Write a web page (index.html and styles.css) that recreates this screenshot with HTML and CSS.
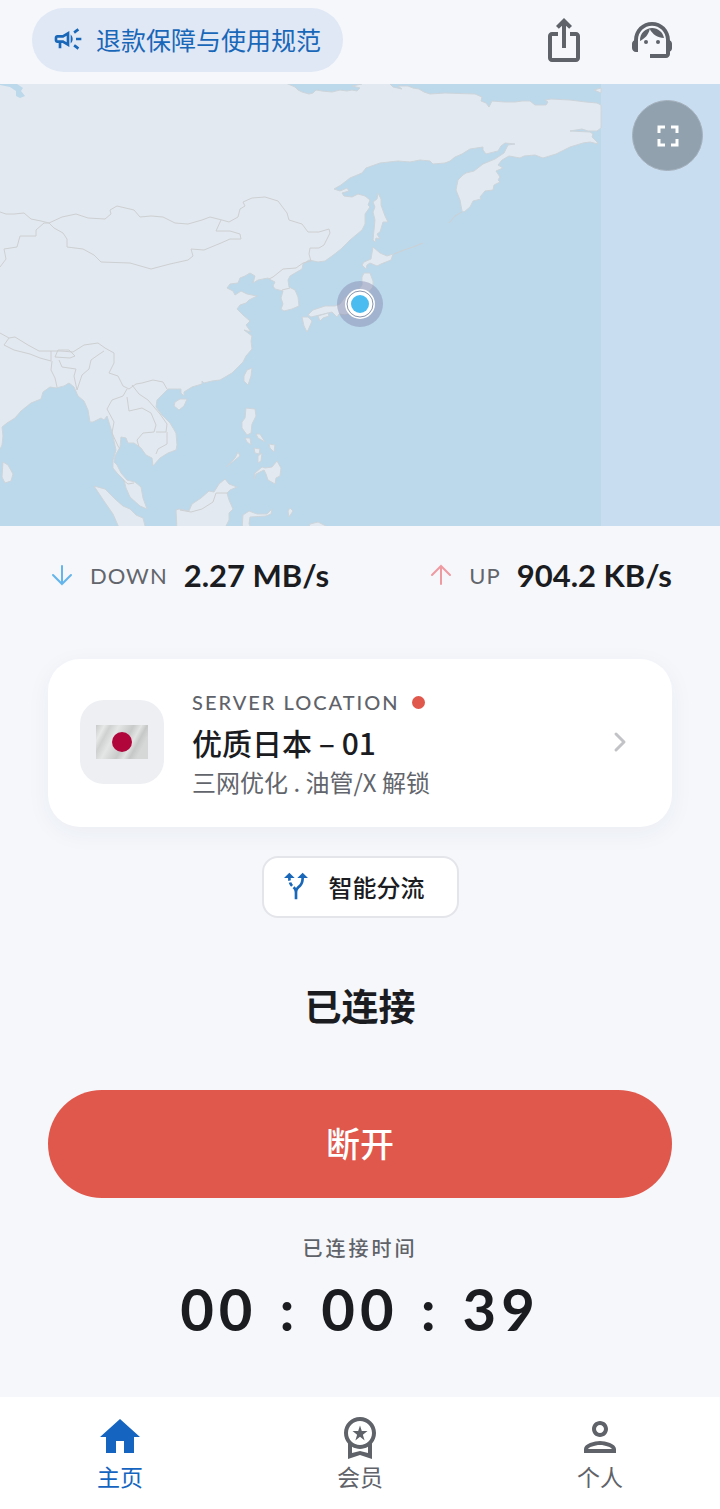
FILE: index.html
```html
<!DOCTYPE html>
<html lang="zh-CN">
<head>
  <meta charset="UTF-8" />
  <meta name="viewport" content="width=device-width, initial-scale=1.0" />
  <title>主页</title>
  <link rel="stylesheet" href="styles.css">
</head>
<body>
  <header class="topbar">
    <a class="notice" href="#notice">
      <svg class="icon-sm" viewBox="0 0 24 24" aria-hidden="true"><path d="M18 11v2h4v-2zM16 17.61c.96.71 2.21 1.65 3.2 2.39l1.2-1.6c-.99-.74-2.24-1.68-3.2-2.4-.4.54-.8 1.08-1.2 1.61zM20.4 5.6 19.2 4c-.99.74-2.24 1.68-3.2 2.4l1.2 1.6c.96-.72 2.21-1.65 3.2-2.4zM4 9c-1.1 0-2 .9-2 2v2c0 1.1.9 2 2 2h1v4h2v-4h1l5 3V6L8 9H4zm5.03 1.71L11 9.53v4.94l-1.97-1.18-.48-.29H4v-2h4.55l.48-.29zM15.5 12c0-1.33-.58-2.53-1.5-3.35v6.69c.92-.81 1.5-2.01 1.5-3.34z"/></svg>
      退款保障与使用规范
    </a>
    <div class="actions">
      <button class="icon-btn" aria-label="分享">
        <svg class="icon" viewBox="0 0 24 24"><path d="M16 5l-1.42 1.42-1.59-1.59V16h-1.98V4.83L9.42 6.42 8 5l4-4 4 4zm4 5v11c0 1.1-.9 2-2 2H6c-1.11 0-2-.9-2-2V10c0-1.11.89-2 2-2h3v2H6v11h12V10h-3V8h3c1.1 0 2 .89 2 2z"/></svg>
      </button>
      <button class="icon-btn" aria-label="客服">
        <svg class="icon" viewBox="0 0 24 24"><path d="M21 12.22C21 6.73 16.74 3 12 3c-4.69 0-9 3.65-9 9.28-.6.34-1 .98-1 1.72v2c0 1.1.9 2 2 2h1v-6.1c0-3.87 3.13-7 7-7s7 3.13 7 7V19h-8v2h8c1.1 0 2-.9 2-2v-1.22c.59-.31 1-.92 1-1.64v-2.3c0-.7-.41-1.31-1-1.62z"/><circle cx="9" cy="13" r="1"/><circle cx="15" cy="13" r="1"/><path d="M18 11.03C17.52 8.18 15.04 6 12.05 6c-3.03 0-6.29 2.51-6.03 6.45 2.47-1.01 4.33-3.21 4.86-5.89 1.31 2.63 4 4.44 7.12 4.47z"/></svg>
      </button>
    </div>
  </header>

  <section class="map">
    <svg class="map-svg" viewBox="0 84 720 442" aria-hidden="true">
      <rect class="sea" x="0" y="84" width="601" height="442"/>
      <g class="land">
        <!-- mainland -->
        <path d="M-4 80H280L288 84 295 87 298 90 302 92 309 94 313 93 316 90 322 91 332 92 340 90 347 91 352 90 357 91 360 88 352 86 362 84 366 80H386L390 84 393 87 402 89 398 86 408 86 413 88 419 89 424 92 430 94 445 93 475 94 482 97 481 101 486 103 489 107 492 101 505 102 515 102 522 101 530 101 535 105 546 105 548 102 545 100 551 99 570 100 586 102 597 103 601 105V128L597 131H588L582 129 570 131 590 132 593 134 592 137 597 142 598 144 590 142 583 143 570 147 556 154 543 158 535 155 524 156 520 158 509 156 502 160 498 165 503 168 496 171 500 177 498 180 500 182 494 185 493 190 485 191 480 197 481 199 473 201 470 207 464 212 462 211 460 200 456 190 458 180 463 175 466 173 474 171 483 164 495 159 504 153 508 145 515 144 505 143 501 146 498 151 486 154 483 150 483 147 470 149 462 154 455 157 450 161 445 163 433 164 430 161 420 160 410 162 398 161 380 163 366 168 362 173 350 178 341 185 334 189 340 191 347 188 349 191 342 193 344 196 352 197 358 194 365 196 370 200 368 205 370 207 365 214 365 224 362 230 350 240 341 249 332 256 325 261 318 262 309 260 303 264 302 269 290 276 288 280 289 287 295 290 298 297 299 306 292 309 284 311 281 309 283 304 281 298 283 291 275 289 273 286 275 282 271 280 268 278 258 280 253 283 255 276 250 273 245 276 240 278 238 283 230 284 227 288 233 291 235 295 241 291 247 294 257 296 249 300 246 303 240 305 237 309 243 315 250 321 246 325 251 332 244 330 252 336 251 341 252 349 246 356 243 362 238 367 232 373 220 380 212 381 204 383 202 381 202 384 192 387 184 392 184 396 181 393 181 389 174 389 168 389 162 395 157 400 156 407 162 415 170 423 176 433 177 445 176 450 168 453 160 458 153 466 152 458 146 455 141 448 134 443 128 443 126 438 121 437 120 447 115 456 114 462 117 465 121 473 127 480 135 482 141 487 143 498 147 509 140 506 130 497 126 488 124 480 117 473 113 468 113 460 116 450 112 432 107 416 104 420 101 418 93 422 90 422 88 410 84 401 78 396 74 387 69 383 64 386 56 388 50 387 43 392 41 399 31 403 21 411 15 418 7 423 2 427 3 436 2 445 -4 458Z"/>
        <!-- sakhalin, hokkaido, honshu, kyushu, shikoku -->
        <path d="M378 193 381 199 381 205 385 216 388 222 383 222 380 232 377 234 380 239 376 238 375 242 373 240 375 220 373 212 375 207 373 202 377 199Z"/>
        <path d="M373 247 380 253 387 256 393 254 391 260 381 264 377 266 370 263 367 265 366 269 362 265 364 262 371 259Z"/>
        <path d="M364 273 370 273 373 281 373 287 367 294 366 302 360 312 352 313 345 315 339 314 337 317 332 312 324 314 311 317 308 315 313 310 325 306 335 306 340 304 345 297 355 294 362 285 362 277Z"/>
        <path d="M302 317 308 317 312 321 309 328 307 332 304 326ZM318 316 328 313 329 316 323 318 320 321Z"/>
        <!-- taiwan, hainan, sri lanka, borneo, sumatra -->
        <path d="M247 370 252 368 251 376 248 385 244 381 244 376ZM175 402 180 399 187 399 184 406 179 410 174 406ZM3 462 8 465 13 474 11 481 5 483 2 477Z"/>
        <path d="M177 530 176 510 179 509 189 511 192 504 201 498 209 491 214 492 219 484 225 479 229 484 237 487 230 490 227 493 229 500 233 509 229 513 229 520 224 530Z"/>
        <path d="M94 486 105 489 115 499 123 506 130 509 136 515 143 518 146 530H120L113 514 104 501Z"/>
        <!-- philippines and sulawesi -->
        <path d="M246 408 255 409 256 416 252 424 251 433 247 435 242 428 242 422 245 418ZM245 438 250 438 251 445 247 442ZM256 434 260 434 265 442 258 438ZM269 444 275 445 274 452 270 448ZM254 448 260 449 259 454 255 453ZM258 456 262 453 261 461 258 463ZM255 473 262 467 265 468 272 467 277 461 281 468 280 476 276 478 275 484 268 480 266 474 264 470 256 474 254 479ZM238 452 240 456 226 467 235 458Z"/>
        <path d="M242 530 243 515 249 511 257 514 267 514 272 509 271 514 266 516 250 517 249 524 252 530ZM290 508 293 511 289 517 288 511ZM308 530 310 524 318 522 326 526 328 530ZM594 90 601 88V93Z"/>
      </g>
      <!-- inlets -->
      <path class="sea" d="M0 84H17L23 88 21 91 25 96 20 98 16 96 16 91 10 87 0 85Z"/>
      <g class="borders">
        <path d="M0 212 6 214 14 214 24 213 31 219 41 221 49 223 62 217 76 214 88 218 105 219 111 214 110 210 117 206 134 210 140 217 151 216 163 217 175 223 188 224 202 220 210 217 222 220 229 222 238 217 240 209 245 206 243 202 252 198 265 197 278 201 287 213 289 220 302 224 308 232 319 232 329 229 330 233 324 245 319 248 310 248 309 254 311 261 303 263 296 268 283 269 273 277 269 279"/>
        <path d="M49 223 54 228 63 233 67 239 67 247 83 249 94 255 101 262 130 263 151 269 170 264 188 260 193 256 191 249 204 250 221 243 230 239 241 239 240 234 230 231 216 231 221 220"/>
        <path d="M49 223 44 223 36 230 36 236 20 236 17 247 4 249 6 259 0 267"/>
        <path d="M0 333 9 338 15 337 28 345 39 351 54 351 61 351 73 352 84 345 98 343 105 348 114 353 114 363 109 373 118 376 123 386 129 389 136 384 142 383 153 380 163 382 167 389"/>
        <path d="M9 338 4 345 14 350 30 354 40 358 51 361 51 351M55 357 58 350 69 350 75 356 70 358ZM52 361 51 370 55 378 57 387M59 360 62 367 76 369 74 376 77 390M77 390 82 375 89 369 91 360 98 355 104 351"/>
        <path d="M127 389 123 396 112 400 107 409 114 422 112 433 118 446 120 449M127 397 129 411 142 408 151 413 156 425 154 432 143 433 137 440 139 447M132 385 139 394 148 400 160 414 167 424 166 432 156 432M167 432 167 444 158 449 156 454M123 480 128 484 134 483M180 510 191 512 202 509 213 502 216 493 228 493M282 290 290 288"/>
        <path d="M394 254 404 250 413 247 423 243M462 212 455 216 449 223"/>
      </g>
      <circle class="marker-halo" cx="360" cy="304" r="23"/>
      <circle class="marker-edge" cx="360" cy="304" r="15"/>
      <circle class="marker-ring" cx="360" cy="304" r="13"/>
      <circle class="marker-dot" cx="360" cy="304" r="9"/>
    </svg>
    <button class="fullscreen" aria-label="全屏">
      <svg class="icon-fs" viewBox="0 0 24 24"><path d="M7 14H5v5h5v-2H7v-3zm-2-4h2V7h3V5H5v5zm12 7h-3v2h5v-5h-2v3zM14 5v2h3v3h2V5h-5z"/></svg>
    </button>
  </section>

  <main class="content">
    <div class="stats">
      <div class="stat">
        <svg class="arrow arrow-down" viewBox="0 0 28 28" aria-hidden="true"><path d="M14 5V23M5 14L14 23L23 14"/></svg>
        <span class="stat-label">DOWN</span>
        <strong class="stat-value">2.27 MB/s</strong>
      </div>
      <div class="stat">
        <svg class="arrow arrow-up" viewBox="0 0 28 28" aria-hidden="true"><path d="M14 23V5M5 14L14 5L23 14"/></svg>
        <span class="stat-label">UP</span>
        <strong class="stat-value">904.2 KB/s</strong>
      </div>
    </div>

    <a class="server" href="#servers">
      <span class="flag-box">
        <svg class="flag" viewBox="0 0 52 34" aria-hidden="true">
          <defs>
            <linearGradient id="cloth" x1="0" y1="0" x2="1" y2=".35">
              <stop offset="0" stop-color="#c9caca"/>
              <stop offset=".15" stop-color="#e6e7e7"/>
              <stop offset=".25" stop-color="#cfd0d0"/>
              <stop offset=".4" stop-color="#e4e5e5"/>
              <stop offset=".65" stop-color="#c8c9c9"/>
              <stop offset=".78" stop-color="#e2e3e3"/>
              <stop offset=".88" stop-color="#c6c7c7"/>
              <stop offset="1" stop-color="#d6d7d7"/>
            </linearGradient>
          </defs>
          <rect width="52" height="34" fill="url(#cloth)"/>
          <circle cx="26" cy="17" r="10" fill="#b0063c"/>
        </svg>
      </span>
      <span class="server-info">
        <span class="server-label">SERVER LOCATION <i class="dot"></i></span>
        <span class="server-name">优质日本 – 01</span>
        <span class="server-desc">三网优化 . 油管/X 解锁</span>
      </span>
      <svg class="chevron" viewBox="0 0 20 24" aria-hidden="true"><path d="M6 4L14 12L6 20"/></svg>
    </a>

    <button class="mode">
      <svg class="icon-sm" viewBox="0 0 24 24" aria-hidden="true"><path d="M9.78 11.16l-1.42 1.42c-.68-.69-1.34-1.58-1.79-2.94l1.94-.49c.32.89.77 1.5 1.27 2.01zM11 6L7 2 3 6h3.02c.02.81.08 1.54.19 2.17l1.94-.49C8.08 7.2 8.03 6.63 8.02 6H11zm10 0l-4-4-4 4h2.99c-.1 3.68-1.28 4.75-2.54 5.88-.5.44-1.01.92-1.45 1.55-.34-.49-.73-.88-1.13-1.24L9.46 13.6c.93.85 1.54 1.54 1.54 3.4v5h2v-5c0-2.02.71-2.66 1.79-3.63 1.38-1.24 3.08-2.78 3.2-7.37H21z"/></svg>
      智能分流
    </button>

    <h1 class="status">已连接</h1>
    <button class="disconnect">断开</button>

    <div class="timer-label">已连接时间</div>
    <div class="timer"><span>00</span><span>:</span><span>00</span><span>:</span><span>39</span></div>
  </main>

  <nav class="tabs">
    <a class="tab active" href="#home">
      <svg class="icon" viewBox="0 0 24 24" aria-hidden="true"><path d="M10 20v-6h4v6h5v-8h3L12 3 2 12h3v8z"/></svg>
      主页
    </a>
    <a class="tab" href="#vip">
      <svg class="icon" viewBox="0 0 24 24" aria-hidden="true"><path d="M9.68 13.69L12 11.93l2.31 1.76-.88-2.85L15.75 9h-2.84L12 6.19 11.09 9H8.25l2.31 1.84-.88 2.85zM20 10c0-4.42-3.58-8-8-8s-8 3.58-8 8c0 2.03.76 3.87 2 5.28V23l6-2 6 2v-7.72c1.24-1.41 2-3.25 2-5.28zm-8-6c3.31 0 6 2.69 6 6s-2.69 6-6 6-6-2.69-6-6 2.69-6 6-6zm0 15l-4 1.02v-3.1c1.18.68 2.54 1.08 4 1.08s2.82-.4 4-1.08v3.1L12 19z"/></svg>
      会员
    </a>
    <a class="tab" href="#me">
      <svg class="icon" viewBox="0 0 24 24" aria-hidden="true"><path d="M12 6c1.1 0 2 .9 2 2s-.9 2-2 2-2-.9-2-2 .9-2 2-2m0 10c2.7 0 5.8 1.29 6 2H6c.23-.72 3.31-2 6-2m0-12C9.79 4 8 5.79 8 8s1.79 4 4 4 4-1.79 4-4-1.79-4-4-4zm0 10c-2.67 0-8 1.34-8 4v2h16v-2c0-2.66-5.33-4-8-4z"/></svg>
      个人
    </a>
  </nav>
</body>
</html>
```
FILE: styles.css
```css
* {
  box-sizing: border-box;
}
body {
  margin: 0;
  min-height: 100vh;
  display: flex;
  flex-direction: column;
  font-family: Lato, "Noto Sans CJK SC", sans-serif;
  background: #f5f7fb;
  color: #1b1c1f;
}
a {
  color: inherit;
  text-decoration: none;
}
button {
  font-family: inherit;
  border: none;
  cursor: pointer;
}
svg {
  display: block;
  flex: none;
}
.icon {
  width: 48px;
  height: 48px;
  fill: currentColor;
}
.icon-sm {
  width: 32px;
  height: 32px;
  fill: #1967b8;
}

/* header */
.topbar {
  display: flex;
  justify-content: space-between;
  align-items: flex-start;
  padding: 8px 44px 12px 32px;
}
.notice {
  display: flex;
  align-items: center;
  gap: 12px;
  height: 64px;
  padding: 0 22px 2px 20px;
  border-radius: 32px;
  background: #e0e8f5;
  color: #1967b8;
  font-size: 25px;
}
.actions {
  display: flex;
  gap: 40px;
  padding-top: 8px;
}
.icon-btn {
  padding: 0;
  background: none;
  color: #5f6369;
}

/* map */
.map {
  position: relative;
  background: #c8ddf0;
}
.map-svg {
  width: 100%;
  height: auto;
}
.sea {
  fill: #bcd8eb;
}
.land {
  fill: #e3e9f0;
  stroke: #cdd5da;
  stroke-width: 1;
  stroke-linejoin: round;
}
.borders {
  fill: none;
  stroke: #cdd0d2;
  stroke-width: 1;
  stroke-linejoin: round;
}
.marker-halo {
  fill: #8088ad;
  fill-opacity: 0.45;
}
.marker-edge {
  fill: #fff;
}
.marker-ring {
  fill: #fff;
  stroke: #8794ad;
  stroke-width: 1;
}
.marker-dot {
  fill: #4bbcf0;
}
.fullscreen {
  position: absolute;
  top: 16px;
  right: 17px;
  display: flex;
  align-items: center;
  justify-content: center;
  width: 71px;
  height: 71px;
  padding: 0;
  border: 1px solid #a5b1bd;
  border-radius: 50%;
  background: #91a1ae;
}
.icon-fs {
  width: 36px;
  height: 36px;
  fill: #fff;
}

.content {
  flex: 1;
  display: flex;
  flex-direction: column;
  align-items: center;
  padding: 29px 48px 0;
}

/* speed */
.stats {
  align-self: stretch;
  display: flex;
  justify-content: space-between;
}
.stat {
  display: flex;
  align-items: center;
  height: 40px;
}
.arrow {
  width: 28px;
  height: 28px;
  margin-right: 14px;
  fill: none;
  stroke-width: 2;
  stroke-linecap: round;
}
.arrow-down {
  stroke: #63b5ec;
}
.arrow-up {
  stroke: #ee9aa0;
}
.stat-label {
  margin-right: 16px;
  font-size: 22px;
  letter-spacing: 1px;
  color: #62656b;
}
.stat-value {
  font-size: 31px;
  font-weight: 700;
}

/* server card */
.server {
  align-self: stretch;
  display: flex;
  align-items: center;
  height: 168px;
  margin-top: 64px;
  padding: 0 42px 2px 32px;
  border-radius: 32px;
  background: #fff;
  box-shadow: 0 6px 24px rgba(40, 50, 80, 0.05);
}
.flag-box {
  display: flex;
  align-items: center;
  justify-content: center;
  width: 84px;
  height: 84px;
  margin-right: 28px;
  border-radius: 24px;
  background: #eeeff3;
}
.flag {
  width: 52px;
  height: 34px;
}
.server-info {
  flex: 1;
  display: flex;
  flex-direction: column;
  font-family: "Noto Sans CJK SC", sans-serif;
}
.server-label {
  display: flex;
  align-items: center;
  gap: 12px;
  font-family: Lato, sans-serif;
  font-size: 20px;
  line-height: 40px;
  font-weight: 500;
  letter-spacing: 2px;
  color: #5f6369;
}
.dot {
  width: 13px;
  height: 13px;
  border-radius: 50%;
  background: #e0574c;
}
.server-name {
  font-size: 30px;
  line-height: 40px;
  font-weight: 500;
}
.server-desc {
  font-size: 24px;
  line-height: 40px;
  color: #62656b;
}
.chevron {
  width: 20px;
  height: 24px;
  fill: none;
  stroke: #c2c3c6;
  stroke-width: 3;
  stroke-linecap: round;
  stroke-linejoin: round;
}

.mode {
  display: flex;
  align-items: center;
  gap: 17px;
  height: 62px;
  margin-top: 29px;
  padding: 0 32px 2px 16px;
  border: 2px solid #e4e5ea;
  border-radius: 16px;
  background: #fff;
  color: #1b1c1f;
  font-size: 24px;
  font-weight: 500;
}

.status {
  margin: 61px 0 0;
  font-size: 37px;
  line-height: 56px;
  font-weight: 700;
}
.disconnect {
  align-self: stretch;
  height: 108px;
  margin-top: 55px;
  padding: 0 0 4px;
  border-radius: 54px;
  background: #e0574c;
  color: #fff;
  font-size: 34px;
  font-weight: 500;
}

/* timer */
.timer-label {
  margin-top: 35px;
  font-size: 20px;
  line-height: 30px;
  font-weight: 500;
  letter-spacing: 3px;
  color: #5f6369;
}
.timer {
  display: flex;
  gap: 22px;
  margin-top: 8px;
  font-size: 58px;
  line-height: 76px;
  font-weight: 700;
  letter-spacing: 5px;
}

/* bottom tabs */
.tabs {
  display: grid;
  grid-template-columns: repeat(3, 1fr);
  height: 112px;
  padding-top: 16px;
  background: #fff;
}
.tab {
  display: flex;
  flex-direction: column;
  align-items: center;
  font-size: 23px;
  line-height: 32px;
  color: #5f6369;
}
.tab.active {
  color: #1565c0;
}
```
